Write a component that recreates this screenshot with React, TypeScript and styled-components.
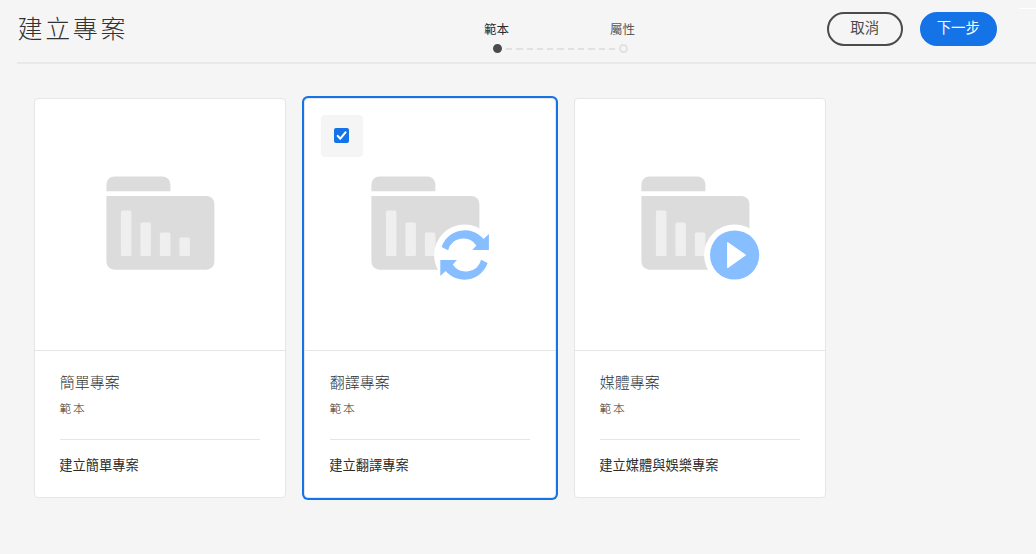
import React from "react";
import styled, { createGlobalStyle } from "styled-components";

const GlobalStyle = createGlobalStyle`
  * { box-sizing: border-box; }
  body {
    margin: 0;
    background: #f5f5f5;
    color: #323232;
    font-family: "Noto Sans CJK TC", "Liberation Sans", sans-serif;
  }
`;

const Page = styled.div`
  position: relative;
  height: 554px;
  overflow: hidden;
`;

const CornerMark = styled.div`
  position: absolute;
  top: 8px;
  right: 0;
  width: 17px;
  height: 1px;
  background: #fff;
`;

const Header = styled.header`
  display: grid;
  grid-template-columns: 467px 151px 1fr;
  margin-left: 17px;
  height: 64px;
  border-bottom: 2px solid #e8e8e8;
`;

const Title = styled.h1`
  margin: 0;
  padding: 9px 0 0 0.6px;
  font-size: 25px;
  line-height: 36px;
  font-weight: 300;
  letter-spacing: 2.6px;
`;

const Steps = styled.div`
  padding-top: 20px;
`;

const StepLabels = styled.div`
  display: flex;
  justify-content: space-between;
  font-size: 12.5px;
  line-height: 18px;
`;

const StepLabel = styled.span<{ $active?: boolean }>`
  color: ${(p) => (p.$active ? "#2c2c2c" : "#5a5a5a")};
`;

const StepTrack = styled.div`
  display: flex;
  align-items: center;
  padding: 6px 7.5px 0 8.5px;
`;

const StepDot = styled.span<{ $active?: boolean }>`
  width: 9px;
  height: 9px;
  border-radius: 50%;
  border: 2px solid ${(p) => (p.$active ? "#4b4b4b" : "#e1e1e1")};
  background: ${(p) => (p.$active ? "#4b4b4b" : "transparent")};
`;

const StepDashes = styled.span`
  flex: 1;
  height: 2px;
  margin: 0 4px;
  background: repeating-linear-gradient(90deg, #e1e1e1 0 6.3px, transparent 6.3px 10.3px);
`;

const Actions = styled.div`
  display: flex;
  justify-content: flex-end;
  gap: 17px;
  padding: 12px 39px 0 0;
`;

const Button = styled.button<{ $primary?: boolean }>`
  height: 33.5px;
  width: ${(p) => (p.$primary ? 77.5 : 75.5)}px;
  padding: 0 0 3px;
  border: 2px solid ${(p) => (p.$primary ? "#1473e6" : "#4b4b4b")};
  border-radius: 17px;
  background: ${(p) => (p.$primary ? "#1473e6" : "transparent")};
  color: ${(p) => (p.$primary ? "#fff" : "#4b4b4b")};
  font-family: inherit;
  font-size: 14.4px;
  line-height: 20px;
`;

const CardGrid = styled.main`
  display: flex;
  gap: 18px;
  padding: 34px 34px;
`;

const Card = styled.article<{ $selected?: boolean }>`
  position: relative;
  width: 252px;
  height: 400px;
  border: 1px solid #e6e6e6;
  border-radius: 4px;
  background: #fff;
  box-shadow: ${(p) => (p.$selected ? "0 0 0 2px #1473e6" : "none")};
`;

const Preview = styled.div`
  display: flex;
  justify-content: center;
  height: 252px;
  padding-top: 77px;
  border-bottom: 1px solid #e6e6e6;
`;

const Details = styled.div`
  padding: 20px 25px 0;
`;

const CardName = styled.h2`
  margin: 0 0 0 -0.3px;
  font-size: 15px;
  line-height: 22px;
  font-weight: 300;
  color: #323232;
`;

const CardKind = styled.p`
  margin: 6px 0 0 -0.5px;
  font-size: 11.75px;
  line-height: 18px;
  font-weight: 300;
  letter-spacing: 1.8px;
  color: #323232;
`;

const CardText = styled.p`
  margin: 22px 0 0;
  padding-top: 15px;
  border-top: 1px solid #e6e6e6;
  font-size: 13.25px;
  line-height: 20px;
  text-indent: -0.8px;
  color: #2c2c2c;
`;

const Selection = styled.div`
  position: absolute;
  top: 15.5px;
  left: 15.5px;
  display: grid;
  place-items: center;
  width: 42px;
  height: 42px;
  border-radius: 4px;
  background: #f5f5f5;
`;

type Badge = "none" | "sync" | "play";

const SYNC_ARROW =
  "M-23-8.1A24.6 24.6 0 0 1 19-16L24.3-21V-5H7.7L11.8-9.5A15.8 15.8 0 0 0-16.5-4.7Z";

function FolderIcon({ badge }: { badge: Badge }) {
  const width = badge === "none" ? 108 : 118;
  return (
    <svg width={width} height="104" viewBox={`-0.4 0 ${width} 104`} overflow="visible">
      <g fill="#dcdcdc">
        <path d="M0 15.3V8.5a8 8 0 0 1 8-8h48a8 8 0 0 1 8 8v6.8Z" />
        <path d="M0 20h100a8 8 0 0 1 8 8v57.7a8 8 0 0 1-8 8H8a8 8 0 0 1-8-8Z" />
      </g>
      <g fill="#efefef">
        <rect x="14.5" y="34.5" width="10.5" height="45.5" rx="1.5" />
        <rect x="34" y="46.5" width="10.5" height="33.5" rx="1.5" />
        <rect x="53.5" y="56.5" width="10.5" height="23.5" rx="1.5" />
        <rect x="73" y="61.5" width="10.5" height="18.5" rx="1.5" />
      </g>
      {badge !== "none" && (
        <g transform="translate(93.2 79)">
          <circle r="30.5" fill="#fff" />
          {badge === "sync" ? (
            <g fill="#87beff">
              <path d={SYNC_ARROW} />
              <path d={SYNC_ARROW} transform="rotate(180)" />
            </g>
          ) : (
            <>
              <circle r="24.6" fill="#87beff" />
              <path d="M-7-12.5 11 0-7 12.8Z" fill="#fff" stroke="#fff" strokeWidth="1" strokeLinejoin="round" />
            </>
          )}
        </g>
      )}
    </svg>
  );
}

function CheckIcon() {
  return (
    <svg width="15" height="15" viewBox="0 0 15 15">
      <rect width="15" height="15" rx="2" fill="#1473e6" />
      <path d="M3.7 7.9 6.3 10.7 11.5 4.4" fill="none" stroke="#fff" strokeWidth="2.1" strokeLinecap="round" strokeLinejoin="round" />
    </svg>
  );
}

const templates: { name: string; text: string; badge: Badge; selected?: boolean }[] = [
  { name: "簡單專案", text: "建立簡單專案", badge: "none" },
  { name: "翻譯專案", text: "建立翻譯專案", badge: "sync", selected: true },
  { name: "媒體專案", text: "建立媒體與娛樂專案", badge: "play" },
];

export default function App() {
  return (
    <Page lang="zh-Hant">
      <GlobalStyle />
      <Header>
        <Title>建立專案</Title>
        <Steps>
          <StepLabels>
            <StepLabel $active>範本</StepLabel>
            <StepLabel>屬性</StepLabel>
          </StepLabels>
          <StepTrack>
            <StepDot $active />
            <StepDashes />
            <StepDot />
          </StepTrack>
        </Steps>
        <Actions>
          <Button>取消</Button>
          <Button $primary>下一步</Button>
        </Actions>
      </Header>
      <CornerMark />
      <CardGrid>
        {templates.map((t) => (
          <Card key={t.name} $selected={t.selected}>
            <Preview>
              <FolderIcon badge={t.badge} />
            </Preview>
            {t.selected && (
              <Selection role="checkbox" aria-checked="true">
                <CheckIcon />
              </Selection>
            )}
            <Details>
              <CardName>{t.name}</CardName>
              <CardKind>範本</CardKind>
              <CardText>{t.text}</CardText>
            </Details>
          </Card>
        ))}
      </CardGrid>
    </Page>
  );
}
